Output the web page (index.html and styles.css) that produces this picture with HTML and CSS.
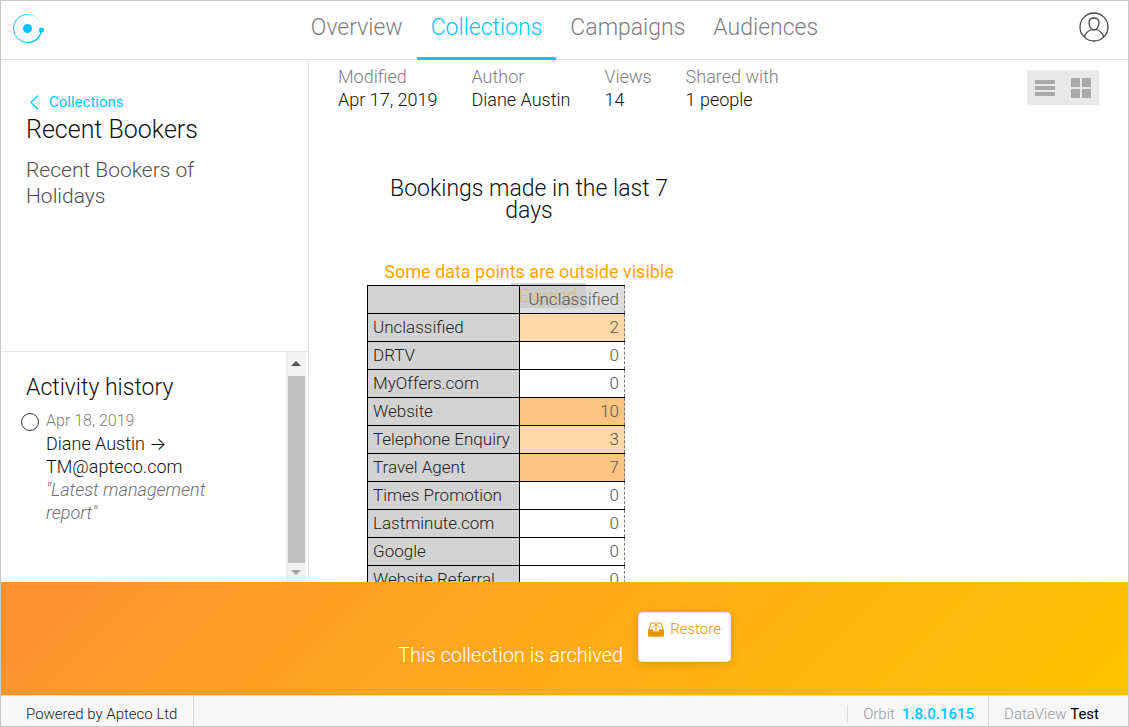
FILE: index.html
```html
<!DOCTYPE html>
<html lang="en">
<head>
    <meta charset="utf-8"/>
    <meta name="viewport" content="width=device-width, initial-scale=1"/>
    <title>Recent Bookers - Apteco Orbit</title>

    <link rel="stylesheet" href="styles.css">
</head>
<body>
    <header class="top-bar">
        <a class="logo" href="#" aria-label="Orbit">
            <svg width="32" height="32" viewBox="0 0 32 32" fill="none">
                <defs>
                    <linearGradient id="fade" x1="0" y1="0" x2="1" y2="0">
                        <stop offset="0.3" stop-color="#00c3ff"/>
                        <stop offset="1" stop-color="#00c3ff" stop-opacity="0.1"/>
                    </linearGradient>
                </defs>
                <path d="M1.5 15.5A14 14 0 0 1 28 9" stroke="url(#fade)"/>
                <path d="M1.5 15.5A14 14 0 0 0 15.5 29.5" stroke="#00c3ff"/>
                <path d="M15.5 29.5A14 14 0 0 0 29.5 17" stroke="#00c3ff" stroke-width="1.5"/>
                <circle cx="15.500" cy="15.500" r="4.500" fill="#00c3ff"/>
                <circle cx="29.500" cy="17" r="2.500" fill="#00c3ff"/>
            </svg>
        </a>
        <nav class="main-nav">
            <a href="#">Overview</a>
            <a href="#" class="active">Collections</a>
            <a href="#">Campaigns</a>
            <a href="#">Audiences</a>
        </nav>
        <button class="user-btn" type="button" aria-label="Account">
            <svg width="30" height="30" viewBox="0 0 30 30" fill="none" stroke="#4a4a4a" stroke-width="1.300">
                <circle cx="15" cy="15" r="14"/>
                <path d="M15 6C11.500 6 10 8 10 11C10 13.500 11 15.500 12.500 17C13.500 18.300 16.500 18.300 17.500 17C19 15.500 20 13.500 20 11C20 8 18.500 6 15 6Z"/>
                <path d="M5.500 25.200C6 21 9 18.800 12.700 17.500M17.300 17.500C21 18.800 24 21 24.500 25.200"/>
            </svg>
        </button>
    </header>

    <div class="content">
        <aside class="sidebar">
            <section class="summary">
                <a class="back" href="#">
                    <svg width="9" height="15" viewBox="0 0 9 15" fill="none" stroke="#00c8ff" stroke-width="1.200">
                        <path d="M8 .5L1 7.500L8 14.500"/>
                    </svg>
                    Collections
                </a>
                <h1>Recent Bookers</h1>
                <p>Recent Bookers of Holidays</p>
            </section>
            <section class="activity">
                <div class="activity-body">
                    <h2>Activity history</h2>
                    <ul>
                        <li>
                            <time>Apr 18, 2019</time>
                            <div>Diane Austin <span class="arrow">→</span> TM@apteco.com</div>
                            <q>Latest management report</q>
                        </li>
                    </ul>
                </div>
                <div class="scrollbar" aria-hidden="true">
                    <span class="up"></span>
                    <span class="thumb"></span>
                    <span class="down"></span>
                </div>
            </section>
        </aside>

        <main>
            <div class="toolbar">
                <dl>
                    <div><dt>Modified</dt><dd>Apr 17, 2019</dd></div>
                    <div><dt>Author</dt><dd>Diane Austin</dd></div>
                    <div><dt>Views</dt><dd>14</dd></div>
                    <div><dt>Shared with</dt><dd>1 people</dd></div>
                </dl>
                <div class="view-toggle">
                    <button type="button" aria-label="List view">
                        <svg width="20" height="18" viewBox="0 0 20 18" fill="#a9a9a9">
                            <rect width="20" height="4" rx=".5" y="1"/>
                            <rect width="20" height="4" rx=".5" y="7"/>
                            <rect width="20" height="4" rx=".5" y="13"/>
                        </svg>
                    </button>
                    <button type="button" aria-label="Grid view">
                        <svg width="20" height="20" viewBox="0 0 20 20" fill="#a9a9a9">
                            <rect width="9" height="9" rx=".5"/>
                            <rect width="9" height="9" rx=".5" x="11"/>
                            <rect width="9" height="9" rx=".5" y="11"/>
                            <rect width="9" height="9" rx=".5" x="11" y="11"/>
                        </svg>
                    </button>
                </div>
            </div>

            <article class="chart">
                <h2>Bookings made in the last 7 days</h2>
                <p class="warning">Some data points are outside visible</p>
                <button class="expand" type="button">Expand</button>
                <table>
                    <thead>
                        <tr><td class="corner"></td><th scope="col">Unclassified</th></tr>
                    </thead>
                    <tbody>
                        <tr><th scope="row">Unclassified</th><td class="low">2</td></tr>
                        <tr><th scope="row">DRTV</th><td>0</td></tr>
                        <tr><th scope="row">MyOffers.com</th><td>0</td></tr>
                        <tr><th scope="row">Website</th><td class="high">10</td></tr>
                        <tr><th scope="row">Telephone Enquiry</th><td class="low">3</td></tr>
                        <tr><th scope="row">Travel Agent</th><td class="high">7</td></tr>
                        <tr><th scope="row">Times Promotion</th><td>0</td></tr>
                        <tr><th scope="row">Lastminute.com</th><td>0</td></tr>
                        <tr><th scope="row">Google</th><td>0</td></tr>
                        <tr><th scope="row">Website Referral</th><td>0</td></tr>
                    </tbody>
                </table>
            </article>
        </main>
    </div>

    <div class="archived">
        <span>This collection is archived</span>
        <button type="button">
            <svg width="16" height="15" viewBox="0 0 16 15" fill="none" stroke="#e69500">
                <path d="M3 1H13L15.500 9V14H.5V9Z"/>
                <path d="M.5 8H5V10H11V8H15.500V14H.5Z" fill="#e69500"/>
                <path d="M8 11V2M4.500 5.500L8 2L11.500 5.500"/>
            </svg>
            Restore
        </button>
    </div>

    <footer>
        <span class="powered">Powered by Apteco Ltd</span>
        <span class="version">Orbit <a href="#">1.8.0.1615</a></span>
        <span class="dataview">DataView <b>Test</b></span>
    </footer>
</body>
</html>
```
FILE: styles.css
```css
* {
    box-sizing: border-box;
}

body {
    margin: 0;
    height: 100vh;
    display: flex;
    flex-direction: column;
    border: 1px solid #c8c8c8;
    font-family: Roboto, "Liberation Sans", sans-serif;
    font-size: 18px;
    font-weight: 300;
    line-height: 23px;
    color: #111;
    background-color: #fff;
}

h1, h2, p, ul, dl, dd {
    margin: 0;
    padding: 0;
    font-weight: 300;
}

a {
    color: #00c8ff;
    text-decoration: none;
}

button {
    font: inherit;
    border: 0;
    padding: 0;
    background: none;
    cursor: pointer;
}

svg {
    display: block;
}

.top-bar {
    flex: none;
    height: 59px;
    display: grid;
    grid-template-columns: 1fr auto 1fr;
    padding: 0 11px;
    border-bottom: 1px solid #e4e4e4;
}

.logo {
    justify-self: start;
    padding-top: 12px;
}

.main-nav {
    display: flex;
    margin-bottom: -1px;
}

.main-nav a {
    padding: 13px 14px 0;
    font-size: 23px;
    line-height: 28px;
    color: #808080;
}

.main-nav .active {
    color: #00c8ff;
    border-bottom: 3px solid #00c8ff;
}

.user-btn {
    justify-self: end;
    align-self: start;
    margin: 11px 8px 0 0;
}

.content {
    flex: 1;
    min-height: 0;
    display: flex;
}

.sidebar {
    flex: none;
    width: 308px;
    display: flex;
    flex-direction: column;
    border-right: 1px solid #e4e4e4;
}

.summary {
    flex: 1;
    padding: 32px 80px 0 25px;
    border-bottom: 1px solid #e4e4e4;
}

.back {
    display: flex;
    align-items: center;
    gap: 10px;
    padding-left: 4px;
    font-size: 15px;
    line-height: 20px;
    font-weight: 400;
}

h1 {
    margin-top: 3px;
    font-size: 25px;
    line-height: 30px;
}

.summary p {
    margin-top: 12px;
    font-size: 21px;
    line-height: 26px;
    color: #505050;
}

.activity {
    flex: none;
    height: 230px;
    display: flex;
    padding-right: 2px;
}

.activity-body {
    flex: 1;
    padding: 22px 50px 0 25px;
}

.activity h2 {
    font-size: 23px;
    line-height: 28px;
}

.activity ul {
    list-style: none;
    margin-top: 8px;
    padding-left: 20px;
}

.activity li {
    position: relative;
}

.activity li::before {
    content: "";
    position: absolute;
    left: -25px;
    top: 3px;
    width: 16px;
    height: 16px;
    border: 1px solid #333;
    border-radius: 50%;
}

.activity time {
    display: block;
    font-size: 16px;
    line-height: 22px;
    color: #808080;
}

.arrow {
    font-family: Inter, sans-serif;
    line-height: 0;
}

.activity q {
    font-style: italic;
    color: #707070;
    quotes: '"' '"';
}

.scrollbar {
    flex: none;
    width: 20px;
    display: flex;
    flex-direction: column;
    align-items: center;
    background-color: #f1f1f1;
}

.up, .down {
    border: 5px solid transparent;
}

.up {
    margin-top: 4px;
    border-bottom-color: #505050;
}

.thumb {
    flex: 1;
    width: 17px;
    margin: 10px 0 7px;
    background-color: #c1c1c1;
}

.down {
    margin-bottom: 2px;
    border-top-color: #a3a3a3;
}

main {
    flex: 1;
    overflow: hidden;
    padding: 5px 29px 0;
}

.toolbar {
    display: flex;
    justify-content: space-between;
    align-items: flex-start;
}

dl {
    display: flex;
    gap: 34px;
}

dt {
    color: #808080;
}

.view-toggle {
    display: flex;
    margin-top: 5px;
    background-color: #e9e9e9;
}

.view-toggle button {
    width: 36px;
    height: 35px;
    display: flex;
    align-items: center;
    justify-content: center;
}

.chart {
    width: 324px;
    margin: 67px 0 0 29px;
    display: flex;
    flex-direction: column;
    align-items: center;
}

.chart h2 {
    padding: 0 20px;
    font-size: 23px;
    line-height: 22px;
    text-align: center;
}

.warning {
    margin-top: 38px;
    font-weight: 400;
    color: #ffa500;
}

.expand {
    height: 25px;
    width: 75px;
    margin: 0 0 -23px 38px;
    background-color: #d3d3d3;
    color: #ffa500;
}

/* the table slides over the expand button */
table {
    position: relative;
    align-self: flex-start;
    border-collapse: collapse;
    font-size: 17px;
    white-space: nowrap;
}

table th, table td {
    height: 28px;
    padding: 0 5px;
    border: 1px solid #000;
    font-weight: 300;
}

tbody th, .corner {
    width: 152px;
    text-align: left;
    color: #222;
    background-color: #d3d3d3;
}

thead th, tbody td {
    width: 105px;
    text-align: right;
    color: #555;
    border-right: 1px dashed #777;
}

thead th {
    background-color: rgba(200, 200, 200, 0.6);
}

tbody .low {
    background-color: #ffd8a8;
}

tbody .high {
    background-color: #ffc580;
}

.archived {
    flex: none;
    display: flex;
    justify-content: center;
    align-items: flex-start;
    gap: 15px;
    height: 113px;
    padding-top: 30px;
    position: relative;
    background-image: linear-gradient(135deg, #ff9132, #ffc400);
}

.archived span {
    margin-top: 31px;
    font-size: 20px;
    line-height: 24px;
    color: #fff;
}

.archived button {
    display: flex;
    align-items: center;
    gap: 6px;
    height: 50px;
    padding: 0 9px 16px;
    border: 1px solid #e8e8e8;
    border-radius: 4px;
    font-size: 15px;
    line-height: 20px;
    color: #e69500;
    background-color: #fff;
    box-shadow: 0 2px 10px rgba(0, 0, 0, 0.15);
}

footer {
    flex: none;
    height: 31px;
    display: flex;
    align-items: stretch;
    border-top: 1px solid #dcdcdc;
    font-size: 15px;
    line-height: 36px;
    color: #999;
    background-color: #f7f7f7;
}

.powered {
    padding: 0 16px 0 25px;
    border-right: 1px solid #dcdcdc;
    color: #222;
}

.version {
    margin-left: auto;
    display: flex;
    gap: 7px;
    padding-right: 14px;
    border-right: 1px solid #dcdcdc;
}

.version::before {
    content: "";
    width: 1px;
    height: 18px;
    margin: 9px 8px 0 0;
    background-color: #dcdcdc;
}

.version a {
    font-weight: 500;
}

.dataview {
    padding: 0 29px 0 15px;
}

.dataview b {
    font-weight: 400;
    color: #000;
}
```
